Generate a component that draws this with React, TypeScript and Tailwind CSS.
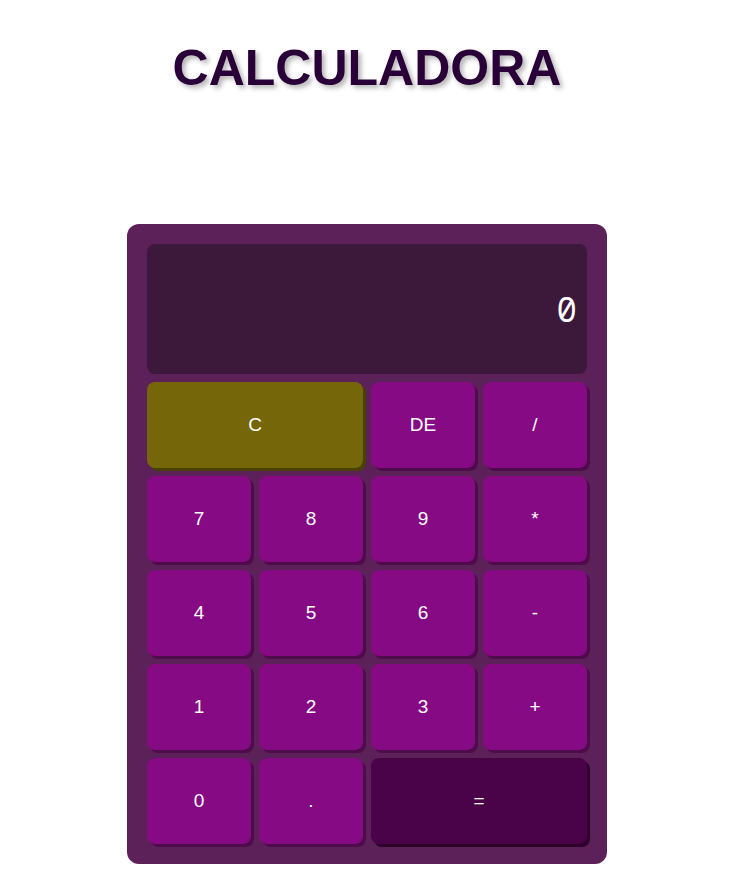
const rows: { label: string; kind?: 'clear' | 'equal'; wide?: boolean }[] = [
  { label: 'C', kind: 'clear', wide: true },
  { label: 'DE' },
  { label: '/' },
  { label: '7' },
  { label: '8' },
  { label: '9' },
  { label: '*' },
  { label: '4' },
  { label: '5' },
  { label: '6' },
  { label: '-' },
  { label: '1' },
  { label: '2' },
  { label: '3' },
  { label: '+' },
  { label: '0' },
  { label: '.' },
  { label: '=', kind: 'equal', wide: true },
];

function Key({ label, kind, wide }: { label: string; kind?: 'clear' | 'equal'; wide?: boolean }) {
  const color =
    kind === 'clear'
      ? 'bg-[#756709] shadow-[3px_3px_0_#4a4106]'
      : kind === 'equal'
        ? 'bg-[#4a0348] shadow-[3px_3px_0_#2c022b]'
        : 'bg-[#850a84] shadow-[3px_3px_0_#4e0c4c]';
  return (
    <button
      className={`${color} ${wide ? 'col-span-2' : ''} h-[86px] rounded-lg text-white text-[19px] font-['Liberation_Sans',Arial,sans-serif]`}
    >
      {label}
    </button>
  );
}

export default function App() {
  return (
    <div className="min-h-screen bg-white flex flex-col items-center pr-[9px] font-['Liberation_Sans',Arial,sans-serif]">
      <h1 className="mt-[31px] text-[50px] font-bold leading-normal text-[#2a0038] [text-shadow:3px_3px_5px_rgba(0,0,0,0.3)]">
        CALCULADORA
      </h1>

      <div className="mt-[118px] w-[480px] rounded-xl bg-[#5d2159] p-5">
        <div className="h-[130px] rounded-lg bg-[#3c193a] flex items-center justify-end pr-[10px] text-white text-[34px] font-['Noto_Sans_Mono',monospace]">
          0
        </div>
        <div className="mt-2 grid grid-cols-4 gap-2">
          {rows.map((k) => (
            <Key key={k.label} {...k} />
          ))}
        </div>
      </div>
    </div>
  );
}
